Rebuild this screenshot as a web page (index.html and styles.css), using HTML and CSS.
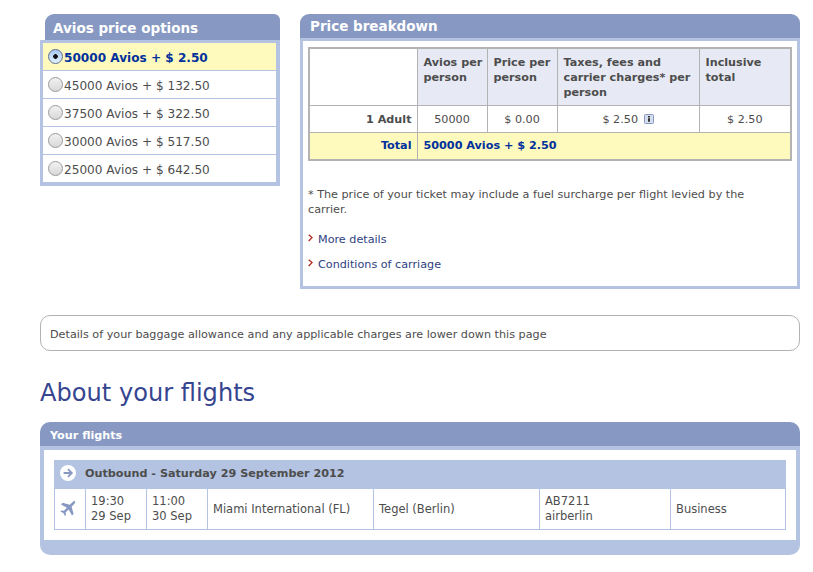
FILE: index.html
```
<!DOCTYPE html>
<html lang="en">
<head>
<meta charset="utf-8">
<title>About your flights</title>
<link rel="stylesheet" href="styles.css">
</head>
<body>
<main class="page">
  <div class="top">
    <section class="options">
      <h2 class="options-title">Avios price options</h2>
      <ul class="options-list">
        <li class="option selected"><span class="radio on"></span>50000 Avios + $ 2.50</li>
        <li class="option"><span class="radio"></span>45000 Avios + $ 132.50</li>
        <li class="option"><span class="radio"></span>37500 Avios + $ 322.50</li>
        <li class="option"><span class="radio"></span>30000 Avios + $ 517.50</li>
        <li class="option"><span class="radio"></span>25000 Avios + $ 642.50</li>
      </ul>
    </section>
    <section class="breakdown">
      <h2 class="breakdown-title">Price breakdown</h2>
      <div class="breakdown-body">
        <table class="price">
          <colgroup><col class="p1"><col class="p2"><col class="p3"><col class="p4"><col class="p5"></colgroup>
          <tr class="head">
            <td class="blank"></td>
            <th>Avios per person</th>
            <th>Price per person</th>
            <th>Taxes, fees and carrier charges* per person</th>
            <th>Inclusive total</th>
          </tr>
          <tr class="adult">
            <td class="label">1 Adult</td>
            <td>50000</td>
            <td>$ 0.00</td>
            <td>$ 2.50 <svg class="info" width="10" height="10" viewBox="0 0 10 10"><rect x=".5" y=".5" width="9" height="9" rx="1" fill="#d5deef" stroke="#8799c2"/><path d="M4 2h2v1.400H4zM4 4.200h2v3.600H4z" fill="#333"/></svg></td>
            <td>$ 2.50</td>
          </tr>
          <tr class="total">
            <td class="label">Total</td>
            <td colspan="4">50000 Avios + $ 2.50</td>
          </tr>
        </table>
        <p class="note">* The price of your ticket may include a fuel surcharge per flight levied by the carrier.</p>
        <a class="more" href="#"><svg width="5" height="8" viewBox="0 0 5 8"><path d="M.7.7 4 3.600.7 7" fill="none" stroke="#b5261e" stroke-width="1.300"/></svg>More details</a>
        <a class="more" href="#"><svg width="5" height="8" viewBox="0 0 5 8"><path d="M.7.7 4 3.600.7 7" fill="none" stroke="#b5261e" stroke-width="1.300"/></svg>Conditions of carriage</a>
      </div>
    </section>
  </div>
  <p class="baggage">Details of your baggage allowance and any applicable charges are lower down this page</p>
  <h1 class="about">About your flights</h1>
  <section class="flights">
    <h2 class="flights-title">Your flights</h2>
    <div class="flights-body">
      <table class="legs">
        <colgroup><col class="l1"><col class="l2"><col class="l3"><col class="l4"><col class="l5"><col class="l6"><col class="l7"></colgroup>
        <tr class="leg-head">
          <th colspan="7">
            <div class="leg-title">
              <svg width="16" height="16" viewBox="0 0 16 16"><circle cx="8" cy="8" r="8" fill="#fff"/><path d="M3.600 8h8M8 4.200 11.800 8 8 11.800" fill="none" stroke="#8799c2" stroke-width="1.800"/></svg>
              <span class="leg-text">Outbound - Saturday 29 September 2012</span>
            </div>
          </th>
        </tr>
        <tr>
          <td class="plane"><svg width="16" height="16" viewBox="0 0 16 16"><path d="M15.600.4c-.8-.6-2.200-.2-3.200.8L9.800 3.800 2.600 1.800 1 3.400l5.900 3.400-3 3-2.300-.4L.4 10.600l3 1.400 1.500 3.100 1.100-1.200-.4-2.300 3-3 3.400 5.900 1.600-1.600-2-7.200 2.600-2.600c1-1 1.400-2.400.4-3.200z" fill="#8799c2"/></svg></td>
          <td>19:30<br>29 Sep</td>
          <td>11:00<br>30 Sep</td>
          <td>Miami International (FL)</td>
          <td>Tegel (Berlin)</td>
          <td>AB7211<br>airberlin</td>
          <td>Business</td>
        </tr>
      </table>
    </div>
  </section>
</main>
</body>
</html>
```
FILE: styles.css
```
* { box-sizing: border-box; }
html, body { margin: 0; padding: 0; background: #fff; }
body {
  font-family: "DejaVu Sans", Verdana, sans-serif;
  font-size: 11.2px;
  line-height: 15px;
  color: #4d4d4d;
}
.page { width: 760px; margin-left: 40px; padding-top: 14px; }
.top { display: flex; gap: 20px; align-items: flex-start; }
h2 { margin: 0; color: #fff; font-weight: bold; background: #8799c2; }

.options { width: 240px; }
.options-title {
  margin-left: 5px;
  height: 26px;
  padding: 6px 0 0 8px;
  font-size: 13.5px;
  line-height: 17px;
  border-radius: 9px 6px 0 0;
}
.options-list {
  list-style: none;
  margin: 0;
  padding: 0;
  border: 3px solid #b3c3e1;
  border-right-width: 4px;
  border-bottom-width: 4px;
}
.option {
  display: flex;
  align-items: center;
  height: 28px;
  padding: 3px 0 0 5px;
  font-size: 12.1px;
  border-bottom: 1px solid #b3c3e1;
}
.option:last-child { height: 27px; border-bottom: 0; }
.selected { background: #fef9bd; color: #00309c; font-weight: bold; }
.radio {
  flex: none;
  width: 15px;
  height: 15px;
  margin: -3px 1px 0 0;
  border: 1px solid #9a9a9a;
  border-radius: 50%;
  background: linear-gradient(#f2f2f2, #d8d8d8);
}
.radio.on {
  border-color: #5c6f92;
  background: radial-gradient(circle, #111 0 2px, transparent 2.6px), linear-gradient(#a9c8f2, #e3f0fd);
}

.breakdown { width: 500px; }
.breakdown-title {
  height: 24px;
  padding: 4px 0 0 10px;
  font-size: 13.5px;
  line-height: 17px;
  border-radius: 9px 9px 0 0;
}
.breakdown-body {
  height: 251px;
  padding: 6px 5px 0 5px;
  border: 3px solid #b3c3e1;
}
.price {
  width: 482px;
  table-layout: fixed;
  border-collapse: collapse;
  border: 2px solid #b3b3b3;
}
.p1 { width: 108px; }
.p2 { width: 70px; }
.p3 { width: 70px; }
.p4 { width: 142px; }
.p5 { width: 92px; }
.price th, .price td { border: 1px solid #b3b3b3; }
.head th {
  height: 55px;
  padding: 6px 2px 5px 6px;
  vertical-align: top;
  text-align: left;
  font-weight: bold;
  background: #e7eaf4;
}
.head .blank { background: #fff; }
.adult td { height: 27px; padding: 0 5px; text-align: center; }
.adult .label { text-align: right; font-weight: bold; }
.info { vertical-align: -1px; margin-left: 2px; }
.total td {
  height: 27px;
  padding: 0 5px 0 6px;
  background: #fef9bd;
  color: #00309c;
  font-weight: bold;
}
.total .label { text-align: right; }
.note { margin: 26px 0 0; width: 470px; }
.more {
  display: flex;
  align-items: center;
  gap: 5px;
  margin-top: 10px;
  color: #2e3f80;
  text-decoration: none;
}
.note + .more { margin-top: 15px; }
.more svg { margin-top: -3px; }

.baggage {
  height: 36px;
  margin: 26px 0 0;
  padding: 11px 9px 0;
  border: 1px solid #b3b3b3;
  border-radius: 10px;
}
.about {
  margin: 26px 0 0;
  font-size: 24.1px;
  line-height: 32px;
  font-weight: normal;
  color: #36458f;
}
.flights { margin-top: 13px; }
.flights-title {
  height: 24px;
  padding: 6px 0 0 10px;
  font-size: 11.2px;
  line-height: 15px;
  border-radius: 10px 10px 0 0;
}
.flights-body {
  height: 109px;
  padding: 10px 9px 0 10px;
  border: solid #b3c3e1;
  border-width: 4px 4px 15px;
  border-radius: 0 0 10px 10px;
  background: #fff;
  background-clip: padding-box;
}
.legs {
  width: 731px;
  table-layout: fixed;
  border-collapse: collapse;
}
.l1 { width: 31px; }
.l2, .l3 { width: 61px; }
.l4, .l5 { width: 166px; }
.l6 { width: 131px; }
.l7 { width: 115px; }
.legs td {
  height: 41px;
  padding: 0 5px;
  font-size: 11.5px;
  border: 1px solid #b3c3e1;
}
.leg-head th {
  height: 28px;
  padding: 0 0 3px 5px;
  background: #b3c3e1;
  border: 1px solid #b3c3e1;
  text-align: left;
  font-weight: bold;
}
.leg-title { display: flex; align-items: center; gap: 9px; }
.leg-text { padding-top: 1px; }
.legs .plane { padding: 0 0 0 5px; }
.plane svg { display: block; }
```
